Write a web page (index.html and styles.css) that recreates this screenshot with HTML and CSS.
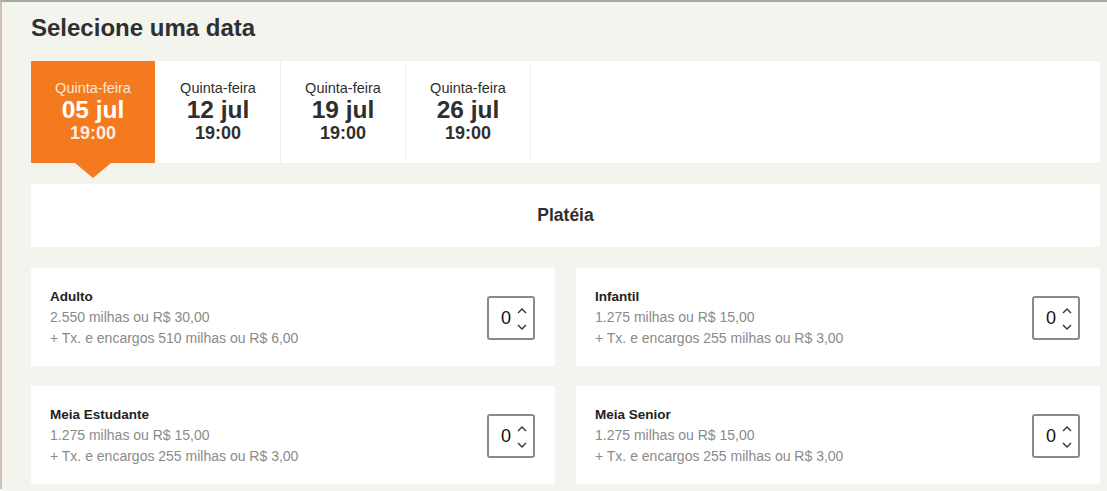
FILE: index.html
```html
<!DOCTYPE html>
<html lang="pt-BR">
<head>
<meta charset="utf-8">
<title>Selecione uma data</title>
<link rel="stylesheet" href="styles.css">
</head>
<body>
<div class="page">
  <h1 class="title">Selecione uma data</h1>
  <div class="dates">
    <div class="date active">
      <div class="day">Quinta-feira</div>
      <div class="dm">05 jul</div>
      <div class="time">19:00</div>
    </div>
    <div class="date">
      <div class="day">Quinta-feira</div>
      <div class="dm">12 jul</div>
      <div class="time">19:00</div>
    </div>
    <div class="date">
      <div class="day">Quinta-feira</div>
      <div class="dm">19 jul</div>
      <div class="time">19:00</div>
    </div>
    <div class="date">
      <div class="day">Quinta-feira</div>
      <div class="dm">26 jul</div>
      <div class="time">19:00</div>
    </div>
  </div>
  <div class="sector">Platéia</div>
  <div class="tickets">
    <div class="ticket">
      <div class="info">
        <div class="name">Adulto</div>
        <div class="price">2.550 milhas ou R$ 30,00</div>
        <div class="price">+ Tx. e encargos 510 milhas ou R$ 6,00</div>
      </div>
      <div class="stepper"><span class="val">0</span><span class="arrows"><svg viewBox="0 0 10 6" class="chev"><path d="M1 5 L5 1 L9 5"/></svg><svg viewBox="0 0 10 6" class="chev"><path d="M1 1 L5 5 L9 1"/></svg></span></div>
    </div>
    <div class="ticket">
      <div class="info">
        <div class="name">Infantil</div>
        <div class="price">1.275 milhas ou R$ 15,00</div>
        <div class="price">+ Tx. e encargos 255 milhas ou R$ 3,00</div>
      </div>
      <div class="stepper"><span class="val">0</span><span class="arrows"><svg viewBox="0 0 10 6" class="chev"><path d="M1 5 L5 1 L9 5"/></svg><svg viewBox="0 0 10 6" class="chev"><path d="M1 1 L5 5 L9 1"/></svg></span></div>
    </div>
    <div class="ticket">
      <div class="info">
        <div class="name">Meia Estudante</div>
        <div class="price">1.275 milhas ou R$ 15,00</div>
        <div class="price">+ Tx. e encargos 255 milhas ou R$ 3,00</div>
      </div>
      <div class="stepper"><span class="val">0</span><span class="arrows"><svg viewBox="0 0 10 6" class="chev"><path d="M1 5 L5 1 L9 5"/></svg><svg viewBox="0 0 10 6" class="chev"><path d="M1 1 L5 5 L9 1"/></svg></span></div>
    </div>
    <div class="ticket">
      <div class="info">
        <div class="name">Meia Senior</div>
        <div class="price">1.275 milhas ou R$ 15,00</div>
        <div class="price">+ Tx. e encargos 255 milhas ou R$ 3,00</div>
      </div>
      <div class="stepper"><span class="val">0</span><span class="arrows"><svg viewBox="0 0 10 6" class="chev"><path d="M1 5 L5 1 L9 5"/></svg><svg viewBox="0 0 10 6" class="chev"><path d="M1 1 L5 5 L9 1"/></svg></span></div>
    </div>
  </div>
</div>
</body>
</html>
```
FILE: styles.css
```css
html, body {
  margin: 0;
  padding: 0;
}
body {
  background: #f4f4ef;
  font-family: "Liberation Sans", Arial, sans-serif;
  color: #333;
  border-top: 2px solid #a9a9a6;
  border-left: 2px solid #d0bfb0;
  min-height: 489px;
  box-sizing: border-box;
}
.page {
  padding: 0 7px 0 29px;
}
.title {
  margin: 0;
  padding-top: 12px;
  height: 59px;
  box-sizing: border-box;
  font-size: 24px;
  font-weight: bold;
  color: #2f2f2f;
  line-height: 28px;
}
.dates {
  display: flex;
  background: #fff;
  height: 102px;
  border-radius: 2px;
}
.date {
  width: 125px;
  box-sizing: border-box;
  border-right: 1px solid #f0f0ec;
  text-align: center;
  padding-top: 19px;
  position: relative;
  color: #2f2f2f;
}
.date.active {
  background: #f47a20;
  color: #fff;
  border-right: none;
  width: 124px;
  margin-right: 1px;
}
.date.active::after {
  content: "";
  position: absolute;
  left: 44px;
  bottom: -15px;
  border-left: 18px solid transparent;
  border-right: 18px solid transparent;
  border-top: 15px solid #f47a20;
}
.day {
  font-size: 14.5px;
  line-height: 17px;
}
.date.active .day {
  color: #fde6d3;
}
.dm {
  font-size: 24.5px;
  font-weight: bold;
  line-height: 25px;
}
.time {
  font-size: 18px;
  font-weight: bold;
  line-height: 23px;
}
.date.active .time {
  color: #fdeee2;
}
.sector {
  margin-top: 21px;
  background: #fff;
  height: 63px;
  display: flex;
  align-items: center;
  justify-content: center;
  font-size: 17.5px;
  font-weight: bold;
  color: #2f2f2f;
  border-radius: 2px;
}
.tickets {
  margin-top: 21px;
  display: grid;
  grid-template-columns: 1fr 1fr;
  column-gap: 21px;
  row-gap: 20px;
}
.ticket {
  background: #fff;
  height: 98px;
  display: flex;
  align-items: center;
  justify-content: space-between;
  padding: 0 20px 0 19px;
  border-radius: 2px;
}
.info {
  padding-top: 1px;
}
.name {
  font-size: 13.5px;
  font-weight: bold;
  color: #222;
  line-height: 20px;
}
.price {
  font-size: 14px;
  color: #8a8a8a;
  line-height: 21px;
}
.stepper {
  width: 48px;
  height: 44px;
  box-sizing: border-box;
  border: 2px solid #8a8a8a;
  border-radius: 3px;
  display: flex;
  align-items: center;
  padding-left: 12px;
  gap: 6px;
  margin-top: 2px;
}
.val {
  font-size: 18px;
  color: #111;
  line-height: 20px;
}
.arrows {
  display: flex;
  flex-direction: column;
  gap: 10px;
  padding-top: 1px;
}
.chev {
  width: 10px;
  height: 6px;
  display: block;
  fill: none;
  stroke: #333;
  stroke-width: 1.4;
}
```
